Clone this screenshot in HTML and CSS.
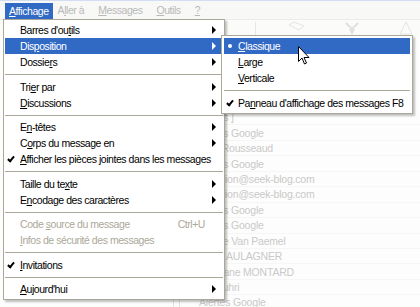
FILE: index.html
```html
<!DOCTYPE html>
<html lang="fr">
<head>
    <meta charset="UTF-8">
    <title>Affichage</title>
    <link rel="stylesheet" href="styles.css">
</head>
<body>
    <div class="window">
        <!-- menu bar -->
        <div class="menubar">
            <span class="menubar-item active"><u>A</u>ffichage</span>
            <span class="menubar-item">A<u>l</u>ler à</span>
            <span class="menubar-item"><u>M</u>essages</span>
            <span class="menubar-item"><u>O</u>utils</span>
            <span class="menubar-item"><u>?</u></span>
        </div>

        <!-- faded toolbar behind the menus -->
        <div class="toolbar">
            <span class="tool-sep"></span>
            <svg class="tool-icon" width="24" height="14" viewBox="0 0 24 14"><path d="M3 4 L8 1 L18 5 L13 9 Z" fill="none" stroke="#e4e4e4"/></svg>
            <svg class="tool-icon" width="24" height="14" viewBox="0 0 24 14"><path d="M6 2 L12 8 L18 2 M10 8 L12 12 L14 8" fill="none" stroke="#e0e0e0" stroke-width="2"/></svg>
            <svg class="tool-icon" width="24" height="14" viewBox="0 0 24 14"><path d="M12 1 L18 13 L6 13 Z" fill="none" stroke="#e4e4e4"/></svg>
        </div>

        <!-- faded message list -->
        <div class="msglist">
            <div class="msg-row"><span class="msg-from">Alertes ]</span></div>
            <div class="msg-row"><span class="msg-from">Alertes Google</span></div>
            <div class="msg-row"><span class="msg-from">Jean Rousseaud</span></div>
            <div class="msg-row"><span class="msg-from">Alertes Google</span></div>
            <div class="msg-row"><span class="msg-from">jo.marion@seek-blog.com</span></div>
            <div class="msg-row"><span class="msg-from">jo.marion@seek-blog.com</span></div>
            <div class="msg-row"><span class="msg-from">Alertes Google</span></div>
            <div class="msg-row"><span class="msg-from">Alertes Google</span></div>
            <div class="msg-row"><span class="msg-from">Sophie Van Paemel</span></div>
            <div class="msg-row"><span class="msg-from">Pierre AULAGNER</span></div>
            <div class="msg-row"><span class="msg-from">Stéphane MONTARD</span></div>
            <div class="msg-row"><span class="msg-from">Ali Zouhri</span></div>
            <div class="msg-row"><span class="msg-icon"></span><span class="msg-from">Alertes Google</span></div>
        </div>

        <!-- Affichage menu -->
        <div class="menu main-menu">
            <div class="item"><span class="mark"></span><span class="label">Barres d'ou<u>t</u>ils</span><span class="arrow"></span></div>
            <div class="item selected"><span class="mark"></span><span class="label">Dis<u>p</u>osition</span><span class="arrow"></span></div>
            <div class="item"><span class="mark"></span><span class="label">Dossie<u>r</u>s</span><span class="arrow"></span></div>
            <div class="sep"></div>
            <div class="item"><span class="mark"></span><span class="label">Tri<u>e</u>r par</span><span class="arrow"></span></div>
            <div class="item"><span class="mark"></span><span class="label"><u>D</u>iscussions</span><span class="arrow"></span></div>
            <div class="sep"></div>
            <div class="item"><span class="mark"></span><span class="label">E<u>n</u>-têtes</span><span class="arrow"></span></div>
            <div class="item"><span class="mark"></span><span class="label">C<u>o</u>rps du message en</span><span class="arrow"></span></div>
            <div class="item"><span class="mark check"></span><span class="label"><u>A</u>fficher les pièces jointes dans les messages</span></div>
            <div class="sep"></div>
            <div class="item"><span class="mark"></span><span class="label">Taille du te<u>x</u>te</span><span class="arrow"></span></div>
            <div class="item"><span class="mark"></span><span class="label">E<u>n</u>codage des caractères</span><span class="arrow"></span></div>
            <div class="sep"></div>
            <div class="item disabled"><span class="mark"></span><span class="label">Code <u>s</u>ource du message</span><span class="shortcut">Ctrl+U</span></div>
            <div class="item disabled"><span class="mark"></span><span class="label"><u>I</u>nfos de sécurité des messages</span></div>
            <div class="sep"></div>
            <div class="item"><span class="mark check"></span><span class="label"><u>I</u>nvitations</span></div>
            <div class="sep"></div>
            <div class="item"><span class="mark"></span><span class="label"><u>A</u>ujourd'hui</span><span class="arrow"></span></div>
        </div>

        <!-- Disposition submenu -->
        <div class="menu sub-menu">
            <div class="item selected"><span class="mark bullet"></span><span class="label"><u>C</u>lassique</span></div>
            <div class="item"><span class="mark"></span><span class="label"><u>L</u>arge</span></div>
            <div class="item"><span class="mark"></span><span class="label"><u>V</u>erticale</span></div>
            <div class="sep"></div>
            <div class="item"><span class="mark check"></span><span class="label">Pa<u>n</u>neau d'affichage des messages F8</span></div>
        </div>

        <!-- mouse pointer -->
        <svg class="cursor" width="12" height="19" viewBox="0 0 12 19">
            <path d="M0.5 0.5 L0.5 15.5 L4 12 L6.5 18 L8.5 17 L6 11.5 L11 11.5 Z" fill="#fff" stroke="#000" stroke-width="1" stroke-linejoin="miter"/>
        </svg>
    </div>
</body>
</html>
```

FILE: styles.css
```css
body {
    margin: 0;
    background-color: #fbfbfa;
    font-family: "Liberation Sans", Arial, sans-serif;
    font-size: 10.5px;
    letter-spacing: -0.45px;
    overflow: hidden;
}

.window {
    position: relative;
    width: 420px;
    height: 307px;
    overflow: hidden;
}

u {
    text-underline-offset: 1px;
}

/* menu bar */

.menubar {
    display: flex;
    height: 18px;
    padding-left: 5px;
    border-top: 1px solid #d3def3;
    background-color: #f8f8f6;
}

.menubar-item {
    display: flex;
    align-items: center;
    padding: 0 7px;
    color: #b9b9b9;
}

.menubar-item.active {
    padding: 0 4px;
    margin-top: 2px;
    margin-right: -2px;
    background-color: #316ac5;
    color: #fff;
}

/* toolbar */

.toolbar {
    display: flex;
    align-items: center;
    gap: 30px;
    height: 16px;
    padding-left: 255px;
    border-top: 1px solid #ececec;
}

.tool-sep {
    width: 1px;
    height: 13px;
    background-color: #e6e6e6;
}

/* message list */

.msglist {
    padding-top: 74px;
    padding-left: 197px;
    background-color: #fdfdfd;
}

.msg-row {
    display: flex;
    align-items: center;
    height: 15.45px;
    border-bottom: 1px solid #f6f6f6;
    box-sizing: border-box;
    color: #c9c9c9;
    letter-spacing: -0.2px;
}

.msg-icon {
    width: 5px;
    height: 9px;
    margin-left: -24px;
    margin-right: 19px;
    border: 1px solid #e2e2e2;
}

/* menus */

.menu {
    position: absolute;
    background-color: #fff;
    border: 1px solid #aca899;
    padding: 2px 1px;
    box-shadow: 2px 2px 2px rgba(0, 0, 0, 0.25);
}

.main-menu {
    left: 3px;
    top: 19px;
    width: 218px;
}

.sub-menu {
    left: 221px;
    top: 35px;
    width: 186px;
    padding: 2px;
}

.item {
    display: flex;
    align-items: center;
    height: 16px;
    color: #000;
    white-space: nowrap;
}

.item.selected {
    background-color: #316ac5;
    color: #fff;
}

.item.disabled {
    color: #aca899;
}

.mark {
    position: relative;
    flex: none;
    width: 15px;
    height: 16px;
}

.sub-menu .mark {
    width: 14px;
}

.mark.check::after {
    content: "";
    position: absolute;
    left: 4px;
    top: 4px;
    width: 2px;
    height: 5px;
    border-right: 2px solid #000;
    border-bottom: 2px solid #000;
    transform: rotate(40deg);
}

.mark.bullet::after {
    content: "";
    position: absolute;
    left: 4px;
    top: 6px;
    width: 4px;
    height: 4px;
    border-radius: 50%;
    background-color: #fff;
}

.label {
    flex: 1;
}

.shortcut {
    margin-right: 18px;
}

.arrow {
    width: 0;
    height: 0;
    margin-right: 7px;
    border-top: 4px solid transparent;
    border-bottom: 4px solid transparent;
    border-left: 4px solid #000;
}

.item.selected .arrow {
    border-left-color: #fff;
}

.sep {
    height: 1px;
    margin: 4px 0 3.5px;
    background-color: #aca899;
}

.cursor {
    position: absolute;
    left: 298px;
    top: 46px;
}
```
